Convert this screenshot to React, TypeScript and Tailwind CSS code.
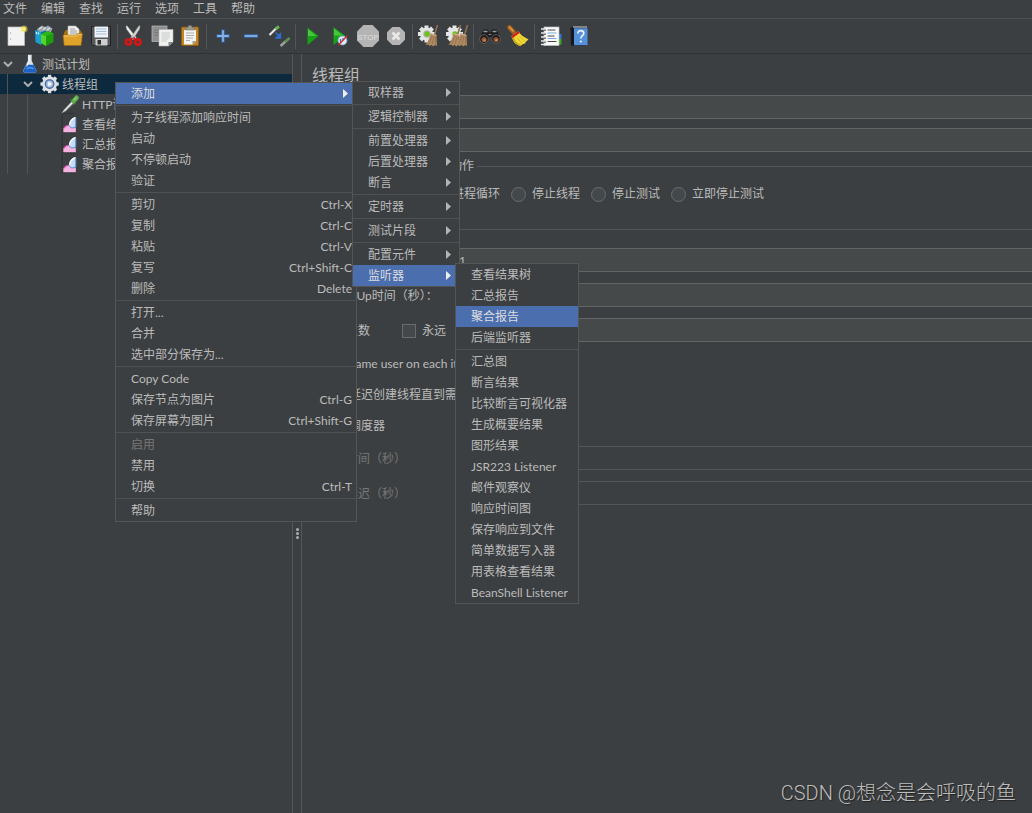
import type { ReactNode } from 'react';

type Entry = {
    label: string;
    shortcut?: string;
    arrow?: boolean;
    active?: boolean;
    disabled?: boolean;
};

const MENU_BAR = ['文件', '编辑', '查找', '运行', '选项', '工具', '帮助'];

// Menus are lists of groups, a separator is drawn between groups
const CONTEXT_MENU: Entry[][] = [
    [{ label: '添加', arrow: true, active: true }],
    [{ label: '为子线程添加响应时间' }, { label: '启动' }, { label: '不停顿启动' }, { label: '验证' }],
    [
        { label: '剪切', shortcut: 'Ctrl-X' },
        { label: '复制', shortcut: 'Ctrl-C' },
        { label: '粘贴', shortcut: 'Ctrl-V' },
        { label: '复写', shortcut: 'Ctrl+Shift-C' },
        { label: '删除', shortcut: 'Delete' },
    ],
    [{ label: '打开...' }, { label: '合并' }, { label: '选中部分保存为...' }],
    [
        { label: 'Copy Code' },
        { label: '保存节点为图片', shortcut: 'Ctrl-G' },
        { label: '保存屏幕为图片', shortcut: 'Ctrl+Shift-G' },
    ],
    [{ label: '启用', disabled: true }, { label: '禁用' }, { label: '切换', shortcut: 'Ctrl-T' }],
    [{ label: '帮助' }],
];

const ADD_MENU: Entry[][] = [
    [{ label: '取样器', arrow: true }],
    [{ label: '逻辑控制器', arrow: true }],
    [
        { label: '前置处理器', arrow: true },
        { label: '后置处理器', arrow: true },
        { label: '断言', arrow: true },
    ],
    [{ label: '定时器', arrow: true }],
    [{ label: '测试片段', arrow: true }],
    [
        { label: '配置元件', arrow: true },
        { label: '监听器', arrow: true, active: true },
    ],
];

const LISTENER_MENU: Entry[][] = [
    [{ label: '查看结果树' }, { label: '汇总报告' }, { label: '聚合报告', active: true }, { label: '后端监听器' }],
    [
        { label: '汇总图' },
        { label: '断言结果' },
        { label: '比较断言可视化器' },
        { label: '生成概要结果' },
        { label: '图形结果' },
        { label: 'JSR223 Listener' },
        { label: '邮件观察仪' },
        { label: '响应时间图' },
        { label: '保存响应到文件' },
        { label: '简单数据写入器' },
        { label: '用表格查看结果' },
        { label: 'BeanShell Listener' },
    ],
];

function Svg({ children }: { children: ReactNode }) {
    return (
        <svg viewBox="0 0 24 24" className="size-6" fill="none" aria-hidden="true">
            {children}
        </svg>
    );
}

function Gear({ cx, cy, r, fill }: { cx: number; cy: number; r: number; fill: string }) {
    return (
        <g stroke={fill} strokeWidth="4">
            {[0, 45, 90, 135].map((deg) => (
                <path key={deg} d={`M${cx - r} ${cy}h${r * 2}`} transform={`rotate(${deg} ${cx} ${cy})`} />
            ))}
            <circle cx={cx} cy={cy} r={r - 4} fill={fill} />
        </g>
    );
}

function Broom({ x = 0 }: { x?: number }) {
    return (
        <g transform={`translate(${x} 0)`}>
            <path d="M19.500 1 16.500 11" stroke="#8c6f50" strokeWidth="1.600" />
            <path d="m12.500 9.500 6 2 .5 10.500-2-1-1.500 1.500-2-1.500-2 1-1-1.500-3 .5c2.500-3 4-7 5-11.500z" fill="#b08a62" />
            <path d="m14 12-3 8M16 12.500l-2 8M17.500 12.500v8" stroke="#8f6c49" strokeWidth=".7" />
            <path d="m12.500 9.500 6 2" stroke="#d5b48c" strokeWidth="1.200" />
        </g>
    );
}

function Page({ x, y, w, h, fill = '#f3f3f3' }: { x: number; y: number; w: number; h: number; fill?: string }) {
    return <rect x={x} y={y} width={w} height={h} fill={fill} stroke="#bdbdbd" strokeWidth=".7" />;
}

const ICONS: Record<string, ReactNode> = {
    新建: (
        <Svg>
            <Page x={3} y={3} w={16.5} h={18.5} />
            <circle cx="5.500" cy="9" r=".6" fill="#888" />
            <circle cx="5.500" cy="15" r=".6" fill="#888" />
            <circle cx="19" cy="5" r="3.600" fill="#f6ee6a" opacity=".5" />
            <circle cx="19" cy="5" r="2.200" fill="#f5e23b" />
            <circle cx="19" cy="5" r="1" fill="#fffbd0" />
        </Svg>
    ),
    模板: (
        <Svg>
            <path d="M4 5 9 1.500l3 1.500 3-1.500 4.500 3L18 8H5z" fill="#9aa5ab" />
            <path d="m6 5 3-2M10 5.500l3-2M14 6l3-2" stroke="#e4e8ea" strokeWidth="1.200" />
            <path d="m2 6 6 2v13l-5.500-3z" fill="#1b9fd6" />
            <path d="m8 8 5-1.500V18L8 21z" fill="#0c6fa0" />
            <path d="M3.500 8v2M5.500 8.600v2" stroke="#d3f1ff" strokeWidth="1.200" />
            <path d="m8 10 7-3 5.500 2.500v8.500L13 22l-5-3z" fill="#1c9c0e" />
            <path d="m8 10 5 2v10l-5-3z" fill="#54d52b" />
            <path d="m8 10 7-3 5.500 2.500-7.500 2.500z" fill="#2db51a" />
        </Svg>
    ),
    打开: (
        <Svg>
            <path d="M3 8.500 5 6h14l2 3v9H3z" fill="#a8700f" />
            <path d="M7 2h7.500L18 5v9H7z" fill="#efefef" stroke="#b9b9b9" strokeWidth=".6" />
            <path d="M9 5h5M9 7h7M9 9h7" stroke="#8a8a8a" strokeWidth=".8" />
            <path d="M2 11h13l2-1.500h4.500L20 21.500H3.200z" fill="#e0a22a" stroke="#9b6a12" strokeWidth=".6" />
            <path d="M3 12h12.500l2-1.500h3" stroke="#f5cf73" strokeWidth=".9" />
        </Svg>
    ),
    保存: (
        <Svg>
            <path d="M2.500 2.500h19v19h-17.500l-1.500-1.500z" fill="#56585b" stroke="#212223" strokeWidth="1" />
            <path d="M5.500 2.500h13.500v11H5.500z" fill="#f1f4f8" />
            <path d="M7 5h10.500M7 7.500h10.500M7 10h10.500" stroke="#9bb8d6" strokeWidth=".9" />
            <path d="M6.500 15H18.500v6.500h-12z" fill="#cfcfcf" />
            <path d="M8.500 16h3.500v4.500H8.500z" fill="#303030" />
        </Svg>
    ),
    剪切: (
        <Svg>
            <path d="m4 2 1-.3L14.500 14l-2 2L4.500 5z" fill="#f0f0f0" stroke="#999" strokeWidth=".5" />
            <path d="m18 2-1-.3L8.500 14l2 2L17.500 5z" fill="#d8d8d8" stroke="#999" strokeWidth=".5" />
            <circle cx="11.500" cy="13.500" r="1" fill="#777" />
            <ellipse cx="6.500" cy="18" rx="2.800" ry="2.400" stroke="#d31616" strokeWidth="2.600" />
            <ellipse cx="16" cy="18" rx="2.600" ry="2.600" stroke="#d31616" strokeWidth="2.600" />
            <path d="m8.500 16 2-2M14 16l-2-2" stroke="#d31616" strokeWidth="2" />
        </Svg>
    ),
    复制: (
        <Svg>
            <Page x={2} y={2} w={15} h={15.5} fill="#8d8f90" />
            <path d="M4.500 6h9M4.500 8.500h6M4.500 11h4" stroke="#777979" />
            <path d="M9 5.500h14V18l-4.500 4H9z" fill="#f1f1ef" stroke="#b5b5b5" strokeWidth=".6" />
            <path d="M11.500 9h8.500M11.500 11h8.500M11.500 13h8.500M11.500 15h7M11.500 17h5" stroke="#c3c5c6" strokeWidth=".9" />
            <path d="M18.500 22v-4H23z" fill="#888" />
        </Svg>
    ),
    粘贴: (
        <Svg>
            <rect x="3.500" y="3" width="17" height="18.500" rx="1" fill="#c48521" stroke="#8d5a0e" strokeWidth=".8" />
            <path d="M6 6h12v11l-3.500 3.500H6z" fill="#f3f3f1" />
            <path d="M8 9h8M8 11.500h8M8 14h7M8 16.500h4" stroke="#a4a6a8" strokeWidth=".9" />
            <path d="M14.500 20.500V17H18z" fill="#9c9c9c" />
            <path d="M7.500 6V3.500h2.500l.5-2h3l.5 2h2.500V6z" fill="#9c9d92" stroke="#66675f" strokeWidth=".5" />
        </Svg>
    ),
    展开: (
        <Svg>
            <path d="M12 5.500v13M5.500 12h13" stroke="#3668ac" strokeWidth="3.600" />
            <path d="M12 6.200v11.600M6.200 12h11.600" stroke="#85b2e8" strokeWidth="1.800" />
        </Svg>
    ),
    收起: (
        <Svg>
            <path d="M5 12h14" stroke="#3668ac" strokeWidth="3.600" />
            <path d="M5.700 12h12.600" stroke="#85b2e8" strokeWidth="1.800" />
        </Svg>
    ),
    切换: (
        <Svg>
            <path d="m2.500 11 6.500-6.500" stroke="#e6e6e6" strokeWidth="2.200" />
            <path d="M8.500 5 12 2.500" stroke="#63b350" strokeWidth="2.800" />
            <path d="m8.500 8.500 4.500 4.500M13.500 9.500V14H9z" stroke="#2f6fd0" strokeWidth="1.300" fill="#2f6fd0" />
            <path d="m13.500 22 5-4.500" stroke="#9ba39a" strokeWidth="2.400" />
            <path d="m18 18 4.500-4" stroke="#5f8f56" strokeWidth="2.800" />
        </Svg>
    ),
    启动: (
        <Svg>
            <path d="m7.500 3.500 11 8.500-11 9z" fill="#17a117" />
            <path d="m8 5 8.500 7H8z" fill="#48c63a" />
        </Svg>
    ),
    不停顿启动: (
        <Svg>
            <path d="m5.500 3 12 9-12 9z" fill="#17a117" />
            <path d="m6 4.500 8.500 7H6z" fill="#48c63a" />
            <circle cx="14.500" cy="16.500" r="4.500" fill="#dfe9f5" stroke="#7fa4d0" strokeWidth=".8" />
            <path d="M12.500 15v3.500M15 14v2" stroke="#3f70b8" strokeWidth="1.300" />
            <path d="m10.500 21 8.500-9" stroke="#d62828" strokeWidth="1.400" />
        </Svg>
    ),
    停止: (
        <Svg>
            <path d="M7.500 1h9L23 7.500v9L16.500 23h-9L1 16.500v-9z" fill="#b4b4b4" />
            <text x="12" y="15.500" textAnchor="middle" fontSize="8" fontFamily="Liberation Sans, sans-serif" fill="#dcdcdc">
                STOP
            </text>
        </Svg>
    ),
    关闭: (
        <Svg>
            <path d="M8.300 3h7.400L21 8.300v7.400L15.700 21H8.300L3 15.700V8.300z" fill="#b4b4b4" />
            <path d="m8.500 8.500 7 7M15.500 8.500l-7 7" stroke="#e9e9e9" strokeWidth="2.800" />
        </Svg>
    ),
    清除: (
        <Svg>
            <Gear cx={9.5} cy={10} r={8.5} fill="#e4e6e6" />
            <circle cx="10" cy="10" r="3.800" fill="#b3b8b0" />
            <circle cx="10" cy="10" r="2.700" fill="#6fc01c" />
            <Broom x={1} />
        </Svg>
    ),
    清除全部: (
        <Svg>
            <Gear cx={9.5} cy={10} r={8.5} fill="#e4e6e6" />
            <circle cx="10" cy="10" r="2.700" fill="#6fc01c" />
            <Broom x={-4} />
            <Broom x={3} />
        </Svg>
    ),
    搜索: (
        <Svg>
            <path d="M4 8 6 5.500h4l1 3h2l1-3h4L20 8l2 7-9 1v-3h-2v3l-9-1z" fill="#1d1d1d" />
            <path d="M5.500 7.500h4M14.500 7.500h4" stroke="#9a9a9a" strokeWidth="1.500" />
            <path d="M10.500 10.500h3" stroke="#888" />
            <circle cx="6" cy="15" r="4.300" fill="#191919" stroke="#6c6c6c" strokeWidth=".8" />
            <circle cx="18" cy="15" r="4.300" fill="#191919" stroke="#6c6c6c" strokeWidth=".8" />
            <circle cx="6" cy="15.500" r="2.600" fill="#8f5432" />
            <circle cx="18" cy="15.500" r="2.600" fill="#8f5432" />
            <circle cx="6.500" cy="16.200" r="1.200" fill="#c78456" />
            <circle cx="18.500" cy="16.200" r="1.200" fill="#c78456" />
        </Svg>
    ),
    重置搜索: (
        <Svg>
            <path d="m3.500 3.500 4.500 5" stroke="#a1601c" strokeWidth="4.600" strokeLinecap="round" />
            <path d="m3.500 3 3.500 4" stroke="#d89a48" strokeWidth="1.600" strokeLinecap="round" />
            <path d="M5.500 12 12.500 7c1.500 3.500 5 6 10 8.500-1.500 1.500-3 2-3.500 4-1.500 0-3 1-4.500 2.500C9.500 21 7 17.500 5.500 12z" fill="#f0d836" />
            <path d="M5.500 12c1.500 5.500 4 9 9 10l.5-1.500C10.500 19 8.500 16.500 7.500 12z" fill="#c9a91c" />
            <path d="m11 13.500 5 6M13.500 12l5.500 5.500" stroke="#c4a51c" strokeWidth=".7" />
            <path d="m5.500 12 7-5 1.200 2L6.500 14z" fill="#cf1d1d" />
        </Svg>
    ),
    函数助手: (
        <Svg>
            <path d="M18 10h4.500v5H18z" fill="#3176da" />
            <path d="M18 15h4.500v5.500H18z" fill="#35a61c" />
            <Page x={5} y={3} w={15} h={18.5} fill="#fbfbfb" />
            <path d="M8.500 6h8M8.500 12h7M8.500 17.500h9" stroke="#333" strokeWidth=".9" />
            <path d="M8.500 9h9M8.500 14.500h9" stroke="#7ba7de" strokeWidth="1.100" />
            <path d="M2 5h5M2 9h5M2 13h5M2 17h5M2 20.500h5" stroke="#e8e8e8" strokeWidth="1.600" />
            <path d="M5 6.200h2M5 10.200h2M5 14.200h2M5 18.200h2" stroke="#333" strokeWidth=".9" />
        </Svg>
    ),
    帮助: (
        <Svg>
            <path d="M3.500 4 6 2.500h14l-1 1.500v17.500H4z" fill="#14191f" />
            <path d="M7 4.200h13.500v17H7z" fill="#5490dc" />
            <path d="M6 3h14" stroke="#dfe6ee" strokeWidth="1" />
            <path d="M10.800 9.500c0-4 6-3.700 6-.2 0 2.400-3 2.400-3 5.200" stroke="#f2f6fc" strokeWidth="1.600" />
            <circle cx="13.800" cy="17.500" r="1.100" fill="#f2f6fc" />
        </Svg>
    ),
    测试计划: (
        <Svg>
            <path d="M9.500 1h4.500v7l5.500 11.500c.5 2-.5 3-2 3H6c-1.500 0-2.500-1-2-3L9.500 8z" fill="#d8e2ea" />
            <path d="M7.500 13h9l3 7c.3 1.500-.5 2.500-2 2.500H6c-1.500 0-2.300-1-2-2.500z" fill="#1a63c4" />
            <path d="M8 18c2-2 6-2 8 0" stroke="#4c97e6" strokeWidth="2" />
            <path d="M11 2v7l-3 6" stroke="#fff" strokeWidth="1.200" />
        </Svg>
    ),
    线程组: (
        <Svg>
            <Gear cx={11.5} cy={12} r={11} fill="#dde1e5" />
            <circle cx="11.500" cy="12" r="5.200" fill="#7d9fcd" stroke="#46638e" strokeWidth="1.300" />
            <circle cx="11.500" cy="12" r="3.800" fill="#a9c5e8" />
            <path d="m10 9 4.500 3-4.500 3z" fill="#fff" />
        </Svg>
    ),
    取样器: (
        <Svg>
            <path d="m1.500 23.500 3-5L14.500 8l3 3L7 21z" fill="#6e736e" />
            <path d="m2.500 22.500 3-4 9-9.500 1.500 1.500-9.500 9.500z" fill="#eceeee" />
            <path d="m12.500 6.500 6 6" stroke="#3c7a35" strokeWidth="2.200" />
            <path d="m16.500 8.500 3.500-4" stroke="#61ae4e" strokeWidth="5.400" strokeLinecap="round" />
            <path d="m17 7 2.500-3" stroke="#98d683" strokeWidth="1.500" />
            <path d="M4 23.500h13" stroke="#2d2f30" />
        </Svg>
    ),
    监听器: (
        <Svg>
            <path d="M2.500 1v21.500h17" stroke="#23282c" strokeWidth="1.200" strokeDasharray="2 1.500" />
            <path d="M4 22v-4.500l3-3 3.500-1 3 3 3-2 2.500 2V22z" fill="#f3b2df" />
            <path d="m4 17.500 3-3 3.500-1" stroke="#d24fae" strokeWidth="1.300" />
            <path d="M11 14c0-5 3-9.500 8-10.500V15c-1.500 2.500-6 3-8-1z" fill="#c4dcf7" />
            <path d="M11.500 13c.5-4 3-7.500 7-8.500" stroke="#f7fbff" strokeWidth="1.800" />
            <path d="M19 5v11M11.500 15c1.500 2 4.500 2.500 7.500 0" stroke="#5488cf" strokeWidth="1.200" />
        </Svg>
    ),
};

const TOOLBAR = [
    ['新建', '模板', '打开', '保存'],
    ['剪切', '复制', '粘贴'],
    ['展开', '收起', '切换'],
    ['启动', '不停顿启动', '停止', '关闭'],
    ['清除', '清除全部'],
    ['搜索', '重置搜索'],
    ['函数助手', '帮助'],
];

function Menu({ groups }: { groups: Entry[][] }) {
    return (
        <div role="menu" className="border border-[#555555] bg-[#3c3f41]">
            {groups.map((group, g) => (
                <div key={g}>
                    {g > 0 && <div className="flex h-[3px] items-center"><div className="h-px w-full bg-[#515151]" /></div>}
                    {group.map((item) => (
                        <button
                            key={item.label}
                            role="menuitem"
                            disabled={item.disabled}
                            className={`flex h-[21px] w-full items-center justify-between whitespace-nowrap pr-1 pl-[15px] disabled:text-[#777777] ${item.active ? 'bg-[#4b6eaf] text-[#dddddd]' : ''}`}
                        >
                            <span className="pt-px">{item.label}</span>
                            {item.shortcut && <span className="pt-px">{item.shortcut}</span>}
                            {item.arrow && (
                                <svg viewBox="0 0 5 9" className="mr-1 h-[9px] w-[5px]" aria-hidden="true">
                                    <path d="M0 0 5 4.500 0 9z" fill={item.active ? '#eeeeee' : '#b4b4b4'} />
                                </svg>
                            )}
                        </button>
                    ))}
                </div>
            ))}
        </div>
    );
}

function TreeRow({ label, icon, depth, open, selected }: { label: string; icon: string; depth: number; open?: boolean; selected?: boolean }) {
    return (
        <li className={`flex h-5 items-center ${selected ? 'bg-[#0d293e]' : ''}`}>
            {Array.from({ length: depth }, (_, i) => (
                <span key={i} className="flex h-5 w-5 pl-[7px]">
                    <span className="w-px bg-[#515355]" />
                </span>
            ))}
            <span className="flex w-5 pl-[3px]">
                {open && (
                    <svg viewBox="0 0 10 6" className="h-[6px] w-[10px]" fill="none" aria-hidden="true">
                        <path d="m1 1 4 4 4-4" stroke="#adadad" strokeWidth="2" />
                    </svg>
                )}
            </span>
            <span className="mr-[2px] flex w-5 [&>svg]:size-5">{ICONS[icon]}</span>
            <span className="whitespace-nowrap pt-[2px]">{label}</span>
        </li>
    );
}

function Field({ id, label, value = '', disabled, inset, children }: { id: string; label: string; value?: string; disabled?: boolean; inset?: boolean; children?: ReactNode }) {
    return (
        <div className="flex h-6 items-center">
            <div className={`flex shrink-0 items-center justify-between pt-[2px] pr-[9px] ${inset ? 'w-[133px]' : 'w-[45px]'}`}>
                <label htmlFor={id} className={`whitespace-nowrap ${disabled ? 'text-[#777777]' : ''}`}>{label}</label>
                {children}
            </div>
            <input
                id={id}
                type="text"
                defaultValue={value}
                disabled={disabled}
                className="h-6 min-w-0 flex-1 border border-r-0 border-[#646464] bg-[#45494a] pl-[3px] disabled:border-[#555555] disabled:bg-[#3c3f41]"
            />
        </div>
    );
}

function Check({ label, checked }: { label: string; checked?: boolean }) {
    return (
        <label className="flex items-center gap-[6px] whitespace-nowrap">
            <input type="checkbox" defaultChecked={checked} className="size-[14px] appearance-none border border-[#6b6b6b] bg-[#43494a]" />
            {label}
        </label>
    );
}

function ThreadGroupPanel() {
    const actions = ['继续', '启动下一进程循环', '停止线程', '停止测试', '立即停止测试'];
    return (
        <main className="min-w-0 flex-1 overflow-hidden border-l border-[#555555] pt-[11px] pl-[10px]">
            <h1 className="h-5 text-base leading-5">线程组</h1>
            <div className="mt-[10px] flex flex-col gap-[9px]">
                <Field id="name" label="名称：" value="线程组" />
                <Field id="comment" label="注释：" />
            </div>

            <fieldset className="mt-[6px] border-t border-l border-[#555555] pt-2 pl-[14px]">
                <legend className="-ml-3 px-[3px] leading-4">在取样器错误后要执行的动作</legend>
                <div className="flex h-6 items-center gap-[11px]">
                    {actions.map((action) => (
                        <label key={action} className="flex shrink-0 items-center gap-[6px]">
                            <input type="radio" name="on-error" className="size-[15px] appearance-none rounded-full border border-[#6b6b6b] bg-[#43494a]" />
                            {action}
                        </label>
                    ))}
                </div>
            </fieldset>

            <fieldset className="mt-[15px] border-t border-l border-[#555555] pt-[11px] pl-[9px]">
                <legend className="-ml-[7px] px-[3px] leading-4">线程属性</legend>
                <div className="flex flex-col gap-[11px]">
                    <Field id="threads" label="线程数：" value="1" inset />
                    <Field id="ramp-up" label="Ramp-Up时间（秒）：" value="1" inset />
                    <Field id="loops" label="循环次数" value="1" inset>
                        <Check label="永远" />
                    </Field>
                </div>
                <div className="mt-[6px] flex flex-col pl-[7px] [&>label]:h-[31px]">
                    <Check label="Same user on each iteration" checked />
                    <Check label="延迟创建线程直到需要" />
                    <Check label="调度器" />
                </div>
                <div className="mt-[5px] flex flex-col gap-[11px]">
                    <Field id="duration" label="持续时间（秒）" disabled inset />
                    <Field id="delay" label="启动延迟（秒）" disabled inset />
                </div>
            </fieldset>
        </main>
    );
}

export default function App() {
    return (
        <div className="relative flex min-h-screen flex-col overflow-hidden bg-[#3c3f41] font-['Lato','Noto_Sans_CJK_SC',sans-serif] text-xs leading-4 text-[#bbbbbb]">
            <nav className="flex h-[19px] items-center gap-[14px] border-b border-[#515151] pl-[3px]">
                {MENU_BAR.map((name) => (
                    <button key={name}>{name}</button>
                ))}
            </nav>

            <div role="toolbar" className="flex h-[35px] items-center border-b border-[#323232] pl-[3px]">
                {TOOLBAR.map((group, g) => (
                    <div key={g} className="flex items-center">
                        {g > 0 && <div className="mx-[2px] h-[25px] w-px bg-[#555555]" />}
                        {group.map((name) => (
                            <button key={name} aria-label={name} className="flex w-7 items-center justify-center">
                                {ICONS[name]}
                            </button>
                        ))}
                    </div>
                ))}
            </div>

            <div className="flex flex-1">
                <aside className="w-[293px] shrink-0 border-r border-[#555555]">
                    <ul>
                        <TreeRow label="测试计划" icon="测试计划" depth={0} open />
                        <TreeRow label="线程组" icon="线程组" depth={1} open selected />
                        <TreeRow label="HTTP请求" icon="取样器" depth={2} />
                        <TreeRow label="查看结果树" icon="监听器" depth={2} />
                        <TreeRow label="汇总报告" icon="监听器" depth={2} />
                        <TreeRow label="聚合报告" icon="监听器" depth={2} />
                    </ul>
                </aside>
                {/* Split pane grip */}
                <div className="flex w-2 shrink-0 flex-col items-center justify-center gap-px pt-[200px]">
                    <span className="size-[3px] rounded-full bg-[#adadad]" />
                    <span className="size-[3px] rounded-full bg-[#adadad]" />
                    <span className="size-[3px] rounded-full bg-[#adadad]" />
                </div>
                <ThreadGroupPanel />
            </div>

            {/* Popup menus */}
            <div className="absolute top-[82px] left-[115px] w-[242px]"><Menu groups={CONTEXT_MENU} /></div>
            <div className="absolute top-[81px] left-[352px] w-[108px]"><Menu groups={ADD_MENU} /></div>
            <div className="absolute top-[263px] left-[455px] w-[124px]"><Menu groups={LISTENER_MENU} /></div>

            <div className="absolute right-4 bottom-[6px] font-['Roboto','Noto_Sans_CJK_SC',sans-serif] text-xl leading-7 font-light text-[#bdbdbd] [text-shadow:1px_1px_1px_#222222]">
                CSDN @想念是会呼吸的鱼
            </div>
        </div>
    );
}
